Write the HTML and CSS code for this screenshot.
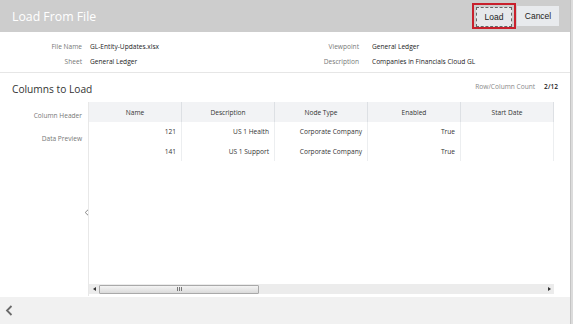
FILE: index.html
```html
<!DOCTYPE html>
<html>
<head>
<meta charset="utf-8">
<link rel="stylesheet" href="styles.css">
</head>
<body>
<div class="dialog">
  <header class="titlebar">
    <h1 class="title">Load From File</h1>
    <div class="actions">
      <span class="focus-ring"><button class="btn btn-load">Load</button></span>
      <button class="btn btn-cancel">Cancel</button>
    </div>
  </header>

  <section class="info">
    <div class="info-col left">
      <div class="info-row"><span class="lbl">File Name</span><span class="val">GL-Entity-Updates.xlsx</span></div>
      <div class="info-row"><span class="lbl">Sheet</span><span class="val">General Ledger</span></div>
    </div>
    <div class="info-col right">
      <div class="info-row"><span class="lbl">Viewpoint</span><span class="val">General Ledger</span></div>
      <div class="info-row"><span class="lbl">Description</span><span class="val">Companies in Financials Cloud GL</span></div>
    </div>
  </section>

  <section class="columns">
    <div class="columns-head">
      <h2 class="sub">Columns to Load</h2>
      <div class="count"><span class="count-lbl">Row/Column Count</span><span class="count-val">2/12</span></div>
    </div>
    <div class="columns-body">
      <div class="side">
        <div class="side-lbl hdr">Column Header</div>
        <div class="side-lbl prev">Data Preview</div>
        <svg class="collapse" width="5" height="7" viewBox="0 0 5 7"><path d="M4 0.8 L1.2 3.5 L4 6.2" fill="none" stroke="#888" stroke-width="1"/></svg>
      </div>
      <div class="panel">
        <div class="grid">
          <div class="th">Name</div><div class="th">Description</div><div class="th">Node Type</div><div class="th">Enabled</div><div class="th">Start Date</div>
          <div class="td">121</div><div class="td">US 1 Health</div><div class="td">Corporate Company</div><div class="td">True</div><div class="td"></div>
          <div class="td">141</div><div class="td">US 1 Support</div><div class="td">Corporate Company</div><div class="td">True</div><div class="td"></div>
        </div>
        <div class="blank"></div>
        <div class="hscroll">
          <span class="arrow left"></span>
          <div class="thumb"><span class="grip"></span></div>
          <span class="track"></span>
          <span class="arrow right"></span>
        </div>
      </div>
    </div>
  </section>

  <footer class="footer">
    <svg width="8" height="11" viewBox="0 0 8 11"><path d="M6.5 1 L2 5.5 L6.5 10" fill="none" stroke="#6a6a6a" stroke-width="1.8"/></svg>
  </footer>
</div>
</body>
</html>
```
FILE: styles.css
```css
* { box-sizing: border-box; }
html, body { margin: 0; padding: 0; }
body {
  width: 573px;
  height: 324px;
  overflow: hidden;
  background: #dcdcdc;
  font-family: "Open Sans", "Noto Sans", sans-serif;
  color: #333;
}
.dialog {
  width: 571px;
  height: 324px;
  background: #fff;
  border-right: 1px solid #c4c4c4;
  display: flex;
  flex-direction: column;
}
.titlebar {
  height: 32px;
  background: #cdcdcd;
  display: flex;
  align-items: center;
  justify-content: space-between;
  padding: 0 11px 0 12px;
  flex-shrink: 0;
}
.title {
  margin: 0;
  font-family: "Open Sans", sans-serif;
  font-weight: 400;
  font-size: 12.3px;
  color: #fff;
}
.actions { display: flex; align-items: center; gap: 1px; }
.focus-ring {
  display: flex;
  border: 2px solid #c8202c;
  padding: 2px;
  width: 44px;
  height: 26px;
}
.btn {
  font-family: "Liberation Sans", Arial, sans-serif;
  font-size: 8.5px;
  color: #222;
  border: none;
  background: #e8eaed;
  height: 20px;
  padding: 0;
}
.btn-load {
  width: 36px;
  border: 1px dashed #666;
  background: #e6e8eb;
}
.btn-cancel { width: 42px; }

.info {
  height: 41px;
  display: flex;
  padding-top: 7px;
  border-bottom: 1px solid #e6e6e6;
  flex-shrink: 0;
}
.info-col { display: flex; flex-direction: column; }
.info-col.left { width: 280px; }
.info-row { display: flex; height: 15px; align-items: center; font-size: 6.6px; }
.lbl { color: #777; text-align: right; }
.val { color: #222; }
.left .lbl { width: 82px; margin-right: 8px; }
.right .lbl { width: 79px; margin-right: 13px; }

.columns { flex: 1; display: flex; flex-direction: column; }
.columns-head {
  height: 29px;
  display: flex;
  align-items: center;
  justify-content: space-between;
  padding: 0 12px 0 12px;
}
.sub { margin: 0; font-weight: 400; font-size: 10.2px; color: #333; padding-top: 3px; }
.count { display: flex; gap: 9px; font-size: 6.6px; padding-bottom: 2px; }
.count-lbl { color: #888; }
.count-val { color: #222; font-weight: 600; }

.columns-body { flex: 1; display: flex; }
.side { width: 88px; display: flex; flex-direction: column; align-items: flex-end; }
.side-lbl { font-size: 6.6px; color: #777; padding-right: 6px; }
.side-lbl.hdr { margin-top: 9px; }
.side-lbl.prev { margin-top: 14px; }
.collapse { margin-top: 66px; margin-right: -1px; }

.panel {
  width: 466px;
  height: 194px;
  display: flex;
  flex-direction: column;
  border-left: 1px solid #e8e8e8;
}
.grid {
  display: grid;
  grid-template-columns: repeat(5, 93px);
  grid-template-rows: 20px 19px 20px;
}
.th {
  background: #f2f3f5;
  border-right: 1px solid #dde0e4;
  font-size: 6.6px;
  color: #333;
  display: flex;
  align-items: center;
  justify-content: center;
}
.td {
  border-right: 1px solid #eceef0;
  font-size: 6.6px;
  color: #333;
  display: flex;
  align-items: center;
  justify-content: flex-end;
  padding-right: 5px;
}
.blank { flex: 1; }
.hscroll {
  height: 10px;
  background: #ececec;
  display: flex;
  align-items: center;
  margin-bottom: 2px;
}
.arrow { width: 10px; height: 10px; position: relative; display: block; }
.arrow.left::before {
  content: ""; position: absolute; left: 4px; top: 3px;
  border-right: 3px solid #333; border-top: 2px solid transparent; border-bottom: 2px solid transparent;
}
.arrow.right::before {
  content: ""; position: absolute; left: 4px; top: 3px;
  border-left: 3px solid #333; border-top: 2px solid transparent; border-bottom: 2px solid transparent;
}
.thumb {
  width: 160px;
  height: 9px;
  border: 1px solid #a9a9a9;
  border-radius: 1px;
  background: linear-gradient(#f4f4f4, #dadada);
  display: flex;
  justify-content: center;
  align-items: center;
}
.grip {
  width: 5px; height: 4px;
  background: repeating-linear-gradient(90deg, #777 0 1px, transparent 1px 2px);
}
.track { flex: 1; }

.footer {
  height: 27px;
  background: #f1f1f1;
  display: flex;
  align-items: center;
  padding-left: 5px;
  flex-shrink: 0;
}
```
